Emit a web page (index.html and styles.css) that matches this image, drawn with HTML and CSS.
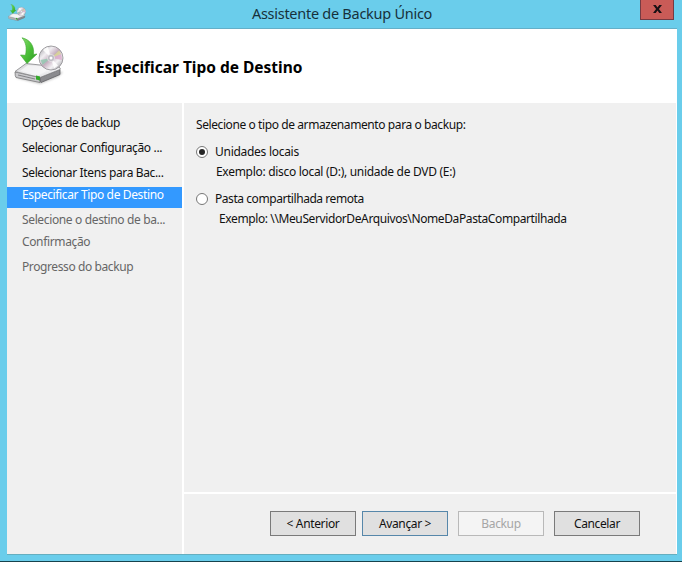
FILE: index.html
```html
<!DOCTYPE html>
<html lang="pt-BR">
<head>
<meta charset="utf-8">
<title>Assistente de Backup Único</title>
<link rel="stylesheet" href="styles.css">
</head>
<body>
<svg class="defs" width="0" height="0" aria-hidden="true">
  <defs>
    <linearGradient id="arrow" x1="0" y1="0" x2="1" y2="1"><stop offset="0" stop-color="#8be070"/><stop offset=".5" stop-color="#4cc039"/><stop offset="1" stop-color="#2c9c20"/></linearGradient>
    <linearGradient id="top" x1="0" y1="0" x2="1" y2="1"><stop offset="0" stop-color="#d0d0d3"/><stop offset=".6" stop-color="#f5f5f7"/><stop offset="1" stop-color="#c8c8cb"/></linearGradient>
    <linearGradient id="disc" x1="0" y1="0" x2="1" y2="1"><stop offset="0" stop-color="#97959b"/><stop offset=".3" stop-color="#f1eff2"/><stop offset=".5" stop-color="#c5aebf"/><stop offset=".7" stop-color="#f3f2f4"/><stop offset="1" stop-color="#8d8b92"/></linearGradient>
    <filter id="soft" x="-20%" y="-50%" width="140%" height="200%"><feGaussianBlur stdDeviation="1.3"/></filter>
    <symbol id="backup" viewBox="0 0 50 50">
      <path d="M2 41l24 6 18-7 5-5-20 0z" fill="#777" opacity=".4" filter="url(#soft)"/>
      <path d="M1 35l25 5.500v5L2 40.500q-1-1-1-5.500z" fill="#c9c9cc" stroke="#777779" stroke-width=".8"/>
      <path d="M26 40.500l20-8v5L27 45.500q-1 0-1-5z" fill="#8b8b8f" stroke="#5f5f63" stroke-width=".8"/>
      <path d="M1 34.500L12 26.500l33 3.500q2 1 1 2.500L26 40.500z" fill="url(#top)" stroke="#858588" stroke-width=".8"/>
      <path d="M6 34L14 28l25 2.500L25 38z" fill="#f6f6f8" opacity=".8"/>
      <path d="M4 38l17 4" stroke="#707073" stroke-width=".8"/>
      <path d="M22 38.500l4 1v4l-4-1z" fill="#35a82b"/>
      <circle cx="37" cy="21" r="12" fill="url(#disc)" stroke="#8d8b8f" stroke-width=".8"/>
      <path d="M37 21l-8-8a11 11 0 0 1 5-3z" fill="#fff" opacity=".85"/>
      <path d="M37 21l10-4a11 11 0 0 1 .8 6z" fill="#d9a9c9" opacity=".8"/>
      <path d="M37 21l8-7.500 2 3.500z" fill="#d8d690" opacity=".8"/>
      <path d="M37 21l-10.500 2 2 5z" fill="#8ec6ac" opacity=".8"/>
      <path d="M37 21l3 10.500 4-3z" fill="#fff" opacity=".85"/>
      <circle cx="37" cy="21" r="3.600" fill="#bdbbc3" stroke="#e9e8ea" stroke-width=".7"/>
      <circle cx="37" cy="21" r="1.500" fill="#fff"/>
      <path d="M8 .8C15.500 2.500 20.500 8 19.500 17.500L23 17 13 26.500 6.500 18l5 .3C13 10.500 12 5.500 8 .8z" fill="url(#arrow)" stroke="#3ba52e" stroke-width=".6"/>
    </symbol>
  </defs>
</svg>
<div class="window">
  <div class="titlebar">
    <svg class="small-icon"><use href="#backup"/></svg>
    <span class="caption">Assistente de Backup Único</span>
    <button class="close" aria-label="Fechar"><svg width="9" height="8" viewBox="0 0 10 9"><path d="M0 0h3l2 2.700L7 0h3L6.600 4.500 10 9H7L5 6.300 3 9H0l3.400-4.500z" fill="#181014"/></svg></button>
  </div>
  <div class="client">
    <header class="header">
      <svg class="large-icon"><use href="#backup"/></svg>
      <h1>Especificar Tipo de Destino</h1>
    </header>
    <div class="body">
      <nav class="steps">
        <div class="step s1">Opções de backup</div>
        <div class="step s2">Selecionar Configuração ...</div>
        <div class="step s3">Selecionar Itens para Bac...</div>
        <div class="step active">Especificar Tipo de Destino</div>
        <div class="step s5 pending">Selecione o destino de ba...</div>
        <div class="step s6 pending">Confirmação</div>
        <div class="step s7 pending">Progresso do backup</div>
      </nav>
      <div class="main">
        <section class="content">
          <p class="intro">Selecione o tipo de armazenamento para o backup:</p>
          <div class="option"><span class="radio checked"></span><span class="local">Unidades locais</span></div>
          <p class="example disk">Exemplo: disco local (D:), unidade de DVD (E:)</p>
          <div class="option"><span class="radio"></span><span class="remote">Pasta compartilhada remota</span></div>
          <p class="example share">Exemplo: \\MeuServidorDeArquivos\NomeDaPastaCompartilhada</p>
        </section>
        <footer class="footer">
          <button class="btn">&lt; Anterior</button>
          <button class="btn default">Avançar &gt;</button>
          <button class="btn disabled" disabled>Backup</button>
          <button class="btn cancel">Cancelar</button>
        </footer>
      </div>
    </div>
  </div>
</div>
</body>
</html>
```
FILE: styles.css
```css
* { box-sizing: border-box; }
body {
  margin: 0;
  font: 12px/16px "Noto Sans", "Open Sans", sans-serif;
  letter-spacing: -0.36px;
  color: #111;
  overflow: hidden;
}
.defs { position: absolute; }
.window {
  width: 682px;
  height: 562px;
  padding: 0 5px 6px 7px;
  background: #6acdeb;
  border-bottom: 1px solid #17434d;
  display: flex;
  flex-direction: column;
}
.titlebar {
  height: 28px;
  display: flex;
  position: relative;
  justify-content: center;
}
.small-icon { position: absolute; left: 1px; top: 4px; width: 18px; height: 18px; }
.caption {
  font-size: 14.5px;
  line-height: 27px;
  letter-spacing: -0.27px;
  color: #17313b;
  white-space: nowrap;
}
.close {
  position: absolute;
  right: 3px;
  top: 0;
  width: 34px;
  height: 20px;
  padding: 0 0 2px;
  background: #c95b57;
  border: 1px solid #743b42;
  border-top: 0;
  display: flex;
  align-items: center;
  justify-content: center;
}
.client {
  flex: 1;
  display: flex;
  flex-direction: column;
  background: #fff;
  border-top: 1px solid #64afc8;
  border-bottom: 1px solid #65aebf;
}
.header {
  height: 74px;
  display: flex;
  background: #fff;
}
.large-icon { width: 50px; height: 50px; margin: 8px 0 0 7px; }
h1 {
  margin: 27px 0 0 32px;
  font-size: 15.5px;
  line-height: 22px;
  letter-spacing: -0.01px;
  color: #000;
}
.body {
  flex: 1;
  display: grid;
  grid-template-columns: 175px 1fr;
  gap: 2px;
  padding-right: 1px;
}
.steps { background: #f0f0f0; padding-top: 12px; white-space: nowrap; }
.step { padding-left: 15px; height: 25px; }
.s3 { height: 22px; margin-bottom: 0; }
.active {
  height: 21px;
  background: #3399ff;
  color: #fff;
}
.s5 { margin-top: 4px; height: 22px; }
.s7 { letter-spacing: -0.4px; }
.pending { color: #666; }
.main { display: flex; flex-direction: column; gap: 2px; }
.content { flex: 1; background: #f0f0f0; padding: 14px 0 0 12px; white-space: nowrap; }
.content p { margin: 0; }
.content .intro { letter-spacing: -0.41px; }
.local { letter-spacing: -0.28px; }
.remote { letter-spacing: -0.44px; }
.content .disk { letter-spacing: -0.3px; }
.option { display: flex; align-items: center; gap: 7px; height: 16px; margin-top: 11px; }
.radio {
  width: 12px;
  height: 12px;
  border: 1px solid #777;
  border-radius: 50%;
  background: #fff;
  display: flex;
}
.checked::after { content: ""; width: 6px; height: 6px; margin: 2px; border-radius: 50%; background: #252525; }
.content .example { margin-top: 4px; margin-left: 20px; }
.content .share { margin-left: 23px; letter-spacing: -0.39px; }
.footer {
  height: 60px;
  display: flex;
  background: #f0f0f0;
  padding: 17px 0 0 86px;
}
.btn {
  width: 86px;
  height: 25px;
  margin-right: 6px;
  padding: 0;
  border: 1px solid #7a7a7a;
  background: #e0e0e0;
  font: inherit;
  letter-spacing: inherit;
  color: #111;
}
.default { border-color: #5687aa; margin-right: 10px; }
.disabled { color: #a6a6a6; background: #f4f4f4; border-color: #b9b9b9; margin-right: 10px; }
```
